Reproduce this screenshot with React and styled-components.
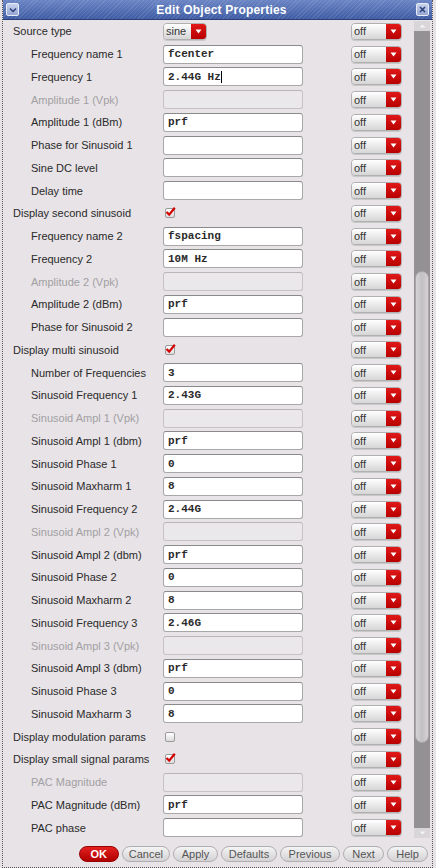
import React from "react";
import styled, { createGlobalStyle } from "styled-components";

const Global = createGlobalStyle`
  html, body { margin: 0; padding: 0; background: #e6e2e6; }
  body { font-family: "Liberation Sans", Arial, sans-serif; }
`;

const Window = styled.div`
  height: 868px;
  box-sizing: border-box;
  display: flex;
  flex-direction: column;
  background: #e7e3e7;
  border-left: 1px dotted #555;
  border-right: 1px dotted #555;
  border-bottom: 1px dotted #555;
  margin-left: 2px;
  width: 431px;
`;

const TitleBar = styled.div`
  height: 19px;
  flex: none;
  display: flex;
  align-items: center;
  justify-content: space-between;
  padding: 0 3px;
  background:
    repeating-linear-gradient(135deg, rgba(255,255,255,0.10) 0 1px, transparent 1px 3px),
    linear-gradient(#6a84c4, #3f5ca4);
  border-bottom: 1px solid #2a3f78;
`;

const TitleText = styled.span`
  color: #fff;
  font-weight: bold;
  font-size: 12px;
  letter-spacing: 0.2px;
  margin-left: 8px;
`;

const TitleBox = styled.span`
  width: 13px;
  height: 13px;
  box-sizing: border-box;
  border: 1px solid #e8ecf8;
  border-radius: 2px;
  background: linear-gradient(#c8d2ec, #95a6d2);
  display: flex;
  align-items: center;
  justify-content: center;
`;

const Main = styled.div`
  flex: 1;
  display: flex;
  min-height: 0;
`;

const Form = styled.div`
  flex: 1;
  display: flex;
  flex-direction: column;
  padding-left: 10px;
`;

const Row = styled.div`
  height: 22.75px;
  display: grid;
  grid-template-columns: 150px 140px 48px 51px;
  align-items: center;
`;

const Cell = styled.div`
  display: flex;
  align-items: center;
`;

const Label = styled.span`
  font-size: 11px;
  color: ${(p) => (p.$dim ? "#a2a0a2" : "#2a2a2a")};
  padding-left: ${(p) => (p.$indent ? "18px" : "0")};
  white-space: nowrap;
`;

const Field = styled.div`
  flex: 1;
  height: 19px;
  box-sizing: border-box;
  border: 1px solid ${(p) => (p.$dim ? "#c6c2c6" : "#a8a8a8")};
  border-top-color: ${(p) => (p.$dim ? "#b8b4b8" : "#8a8a8a")};
  border-radius: 3px;
  background: ${(p) => (p.$dim ? "#ebe8eb" : "#ffffff")};
  font-family: "Liberation Mono", "Courier New", monospace;
  font-weight: bold;
  font-size: 11px;
  color: #2a2a2a;
  display: flex;
  align-items: center;
  padding-left: 4px;
  white-space: nowrap;
`;

const Caret = styled.span`
  display: inline-block;
  width: 1px;
  height: 12px;
  background: #000;
`;

const Dropdown = styled.div`
  width: ${(p) => p.$w}px;
  height: 17px;
  box-sizing: border-box;
  display: flex;
  border-radius: 4px;
  overflow: hidden;
  border: 1px solid #b0b0b0;
  box-shadow: 0 1px 0 #c8c8c8;
`;

const DropText = styled.span`
  flex: 1;
  background: linear-gradient(#ffffff, #e6e6e6 60%, #d6d6d6);
  font-size: 11px;
  color: #333;
  display: flex;
  align-items: center;
  padding-left: 2px;
`;

const DropButton = styled.span`
  width: 15px;
  background: linear-gradient(#e01818, #b80000);
  display: flex;
  align-items: center;
  justify-content: center;
`;

const Check = styled.span`
  display: block;
  width: 10px;
  height: 10px;
  box-sizing: border-box;
  border: 1px solid #9a9a9a;
  border-radius: 2px;
  background: linear-gradient(#ffffff, #dcdcdc);
  margin-left: 2px;
  position: relative;
`;

const CheckMark = styled.svg`
  position: absolute;
  left: -1px;
  top: -3px;
`;

const Scroll = styled.div`
  width: 16px;
  flex: none;
  margin-right: 2px;
  margin-top: 1px;
  margin-bottom: 2px;
  display: flex;
  flex-direction: column;
  background: #939193;
`;

const Arrow = styled.div`
  height: 10px;
  flex: none;
  background: #d8d6d8;
  display: flex;
  align-items: center;
  justify-content: center;
`;

const Track = styled.div`
  height: ${(p) => p.$h}px;
  flex: ${(p) => (p.$h ? "none" : 1)};
`;

const Thumb = styled.div`
  height: 472px;
  flex: none;
  box-sizing: border-box;
  margin: 0 1px;
  border-radius: 7px;
  background: linear-gradient(90deg, #d4d2d4, #c2c0c2 50%, #d4d2d4);
  border: 1px solid #a8a6a8;
`;

const ButtonBar = styled.div`
  height: 27px;
  flex: none;
  display: flex;
  justify-content: flex-end;
  align-items: center;
  gap: 3px;
  padding-right: 4px;
`;

const Button = styled.button`
  height: 16px;
  padding: 0 ${(p) => p.$pad || 6}px;
  border-radius: 8px;
  border: 1px solid ${(p) => (p.$primary ? "#900" : "#b0aeb0")};
  background: ${(p) =>
    p.$primary
      ? "linear-gradient(#e42020, #b00000)"
      : "linear-gradient(#f4f4f4, #d4d2d4)"};
  color: ${(p) => (p.$primary ? "#fff" : "#555")};
  font-family: "Liberation Sans", Arial, sans-serif;
  font-weight: ${(p) => (p.$primary ? "bold" : "normal")};
  font-size: 11px;
  line-height: 14px;
  min-width: ${(p) => p.$w}px;
`;

const Tri = () => (
  <svg width="7" height="5" viewBox="0 0 7 5">
    <path d="M0.5 0.5h6L3.5 4.5z" fill="#fff" />
  </svg>
);

const Select = ({ value, w = 51 }) => (
  <Dropdown $w={w}>
    <DropText>{value}</DropText>
    <DropButton>
      <Tri />
    </DropButton>
  </Dropdown>
);

const CheckBox = ({ checked }) => (
  <Check>
    {checked && (
      <CheckMark width="11" height="11" viewBox="0 0 11 11">
        <path d="M1.5 6 L4.2 8.6 L9.8 1.8" stroke="#d40000" strokeWidth="2.2" fill="none" />
      </CheckMark>
    )}
  </Check>
);

const rows = [
  { l: "Source type", sel: "sine" },
  { l: "Frequency name 1", i: 1, v: "fcenter" },
  { l: "Frequency 1", i: 1, v: "2.44G Hz", caret: true },
  { l: "Amplitude 1 (Vpk)", i: 1, d: 1, v: "" },
  { l: "Amplitude 1 (dBm)", i: 1, v: "prf" },
  { l: "Phase for Sinusoid 1", i: 1, v: "" },
  { l: "Sine DC level", i: 1, v: "" },
  { l: "Delay time", i: 1, v: "" },
  { l: "Display second sinusoid", cb: true },
  { l: "Frequency name 2", i: 1, v: "fspacing" },
  { l: "Frequency 2", i: 1, v: "10M Hz" },
  { l: "Amplitude 2 (Vpk)", i: 1, d: 1, v: "" },
  { l: "Amplitude 2 (dBm)", i: 1, v: "prf" },
  { l: "Phase for Sinusoid 2", i: 1, v: "" },
  { l: "Display multi sinusoid", cb: true },
  { l: "Number of Frequencies", i: 1, v: "3" },
  { l: "Sinusoid Frequency 1", i: 1, v: "2.43G" },
  { l: "Sinusoid Ampl 1 (Vpk)", i: 1, d: 1, v: "" },
  { l: "Sinusoid Ampl 1 (dbm)", i: 1, v: "prf" },
  { l: "Sinusoid Phase 1", i: 1, v: "0" },
  { l: "Sinusoid Maxharm 1", i: 1, v: "8" },
  { l: "Sinusoid Frequency 2", i: 1, v: "2.44G" },
  { l: "Sinusoid Ampl 2 (Vpk)", i: 1, d: 1, v: "" },
  { l: "Sinusoid Ampl 2 (dbm)", i: 1, v: "prf" },
  { l: "Sinusoid Phase 2", i: 1, v: "0" },
  { l: "Sinusoid Maxharm 2", i: 1, v: "8" },
  { l: "Sinusoid Frequency 3", i: 1, v: "2.46G" },
  { l: "Sinusoid Ampl 3 (Vpk)", i: 1, d: 1, v: "" },
  { l: "Sinusoid Ampl 3 (dbm)", i: 1, v: "prf" },
  { l: "Sinusoid Phase 3", i: 1, v: "0" },
  { l: "Sinusoid Maxharm 3", i: 1, v: "8" },
  { l: "Display modulation params", cb: false },
  { l: "Display small signal params", cb: true },
  { l: "PAC Magnitude", i: 1, d: 1, v: "" },
  { l: "PAC Magnitude (dBm)", i: 1, v: "prf" },
  { l: "PAC phase", i: 1, v: "" },
];

export default function App() {
  return (
    <>
      <Global />
      <Window>
        <TitleBar>
          <TitleBox>
            <svg width="8" height="6" viewBox="0 0 8 6">
              <path d="M1 1.5 L4 4.5 L7 1.5" stroke="#2a3f78" strokeWidth="1.5" fill="none" />
            </svg>
          </TitleBox>
          <TitleText>Edit Object Properties</TitleText>
          <TitleBox>
            <svg width="7" height="7" viewBox="0 0 7 7">
              <path d="M1 1 L6 6 M6 1 L1 6" stroke="#2a3f78" strokeWidth="1.5" />
            </svg>
          </TitleBox>
        </TitleBar>
        <Main>
          <Form>
            {rows.map((r, idx) => (
              <Row key={idx}>
                <Label $indent={!!r.i} $dim={!!r.d}>
                  {r.l}
                </Label>
                <Cell>
                  {r.sel ? (
                    <Select value={r.sel} w={44} />
                  ) : r.cb !== undefined ? (
                    <CheckBox checked={r.cb} />
                  ) : (
                    <Field $dim={!!r.d}>
                      {r.v}
                      {r.caret && <Caret />}
                    </Field>
                  )}
                </Cell>
                <span />
                <Select value="off" />
              </Row>
            ))}
          </Form>
          <Scroll>
            <Arrow>
              <svg width="7" height="4" viewBox="0 0 7 4">
                <path d="M0.5 3.5h6L3.5 0.5z" fill="#f4f4f4" />
              </svg>
            </Arrow>
            <Track $h={240} />
            <Thumb />
            <Track />
            <Arrow>
              <svg width="7" height="4" viewBox="0 0 7 4">
                <path d="M0.5 0.5h6L3.5 3.5z" fill="#f4f4f4" />
              </svg>
            </Arrow>
          </Scroll>
        </Main>
        <ButtonBar>
          <Button $primary $w={40}>OK</Button>
          <Button $w={48}>Cancel</Button>
          <Button $w={45}>Apply</Button>
          <Button $w={56}>Defaults</Button>
          <Button $w={60}>Previous</Button>
          <Button $w={41}>Next</Button>
          <Button $w={41}>Help</Button>
        </ButtonBar>
      </Window>
    </>
  );
}
